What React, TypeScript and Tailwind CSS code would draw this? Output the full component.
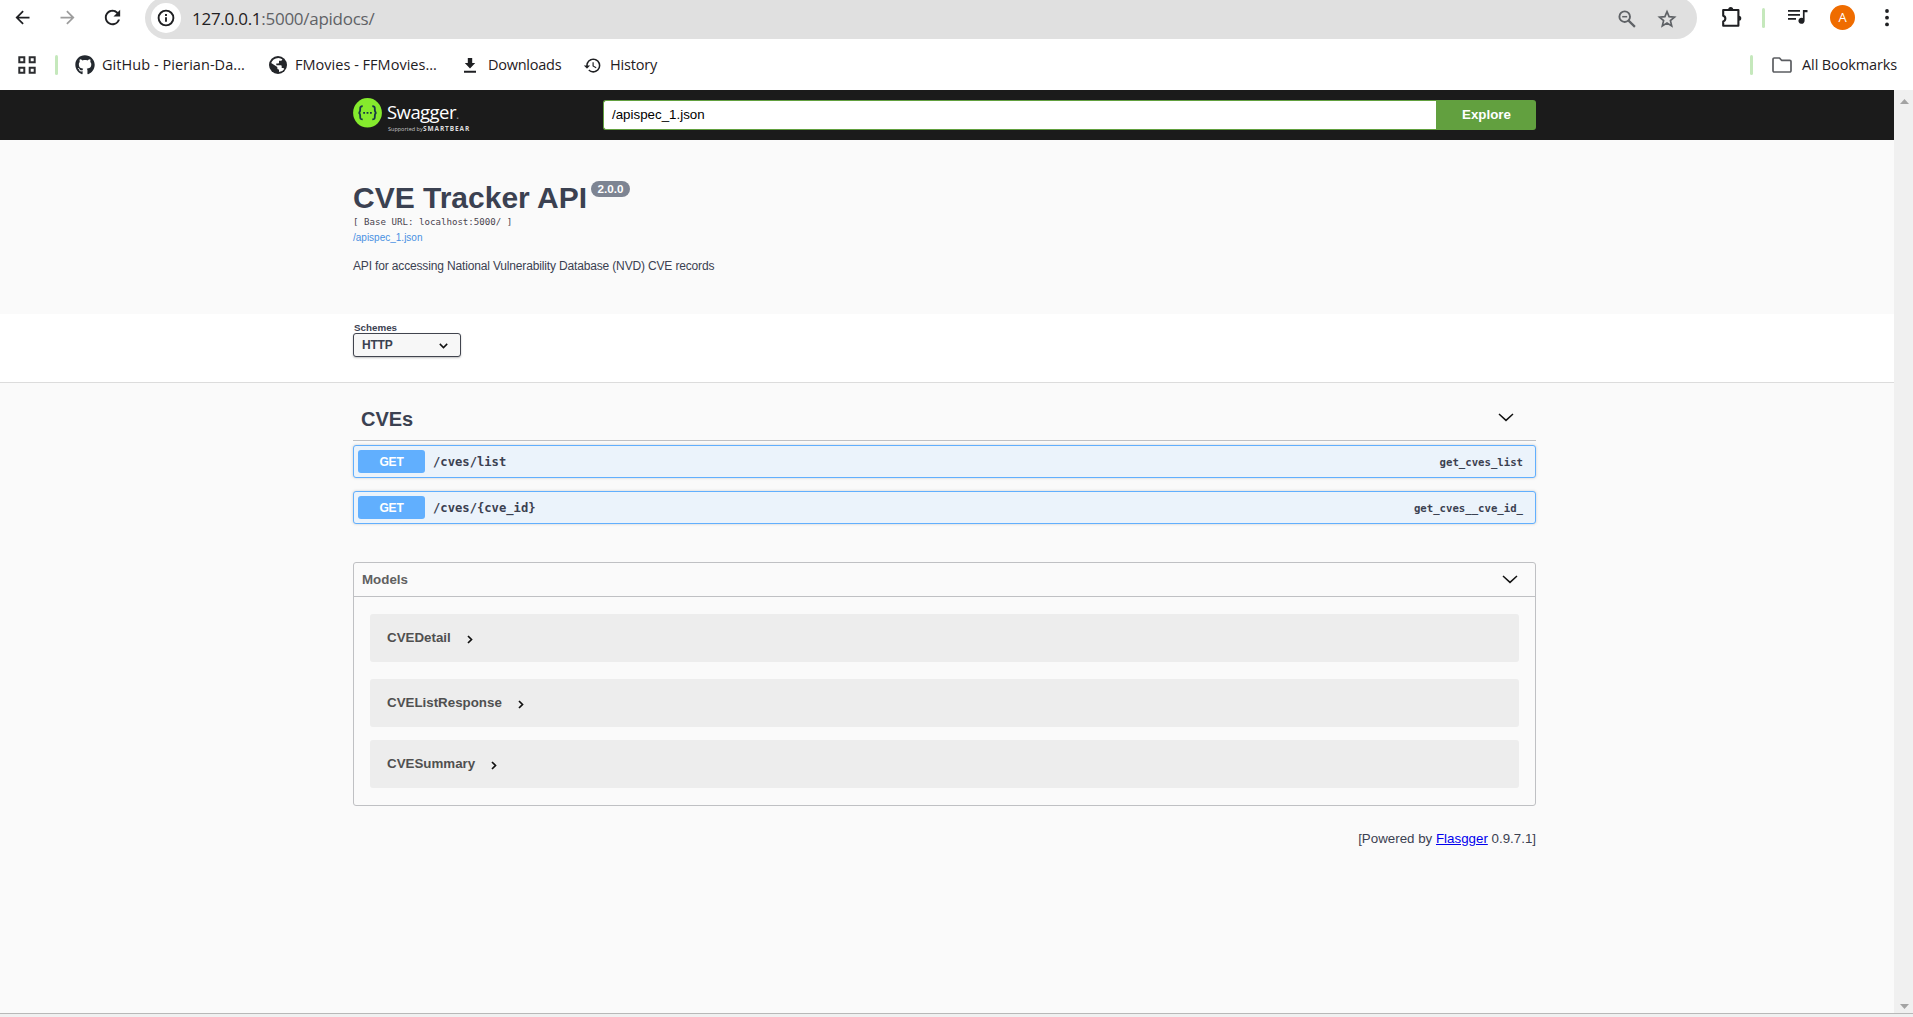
import React from "react";
import { MdArrowBack, MdArrowForward, MdRefresh, MdHistory } from "react-icons/md";
import { FaGithub } from "react-icons/fa";

const sans = "font-['Liberation_Sans',Arial,sans-serif]";
const mono = "font-['DejaVu_Sans_Mono',monospace]";

function Divider() {
  return <div className="h-5 w-[3px] shrink-0 rounded-full bg-[#c5e8bc]" />;
}

function Toolbar() {
  return (
    <div className="flex h-[39px] overflow-hidden text-[#1f2023]">
      <MdArrowBack className="ml-[12px] mt-[7px] size-[21px] shrink-0" />
      <MdArrowForward className="ml-[24px] mt-[7px] size-[21px] shrink-0 text-[#9d9d9d]" />
      <MdRefresh className="ml-[23px] mt-[6px] size-[23px] shrink-0" />
      <div className="-mt-[3px] ml-[21px] flex h-[42px] w-[1552px] shrink-0 items-center rounded-full bg-[#e0e0e0] pl-[6px] pr-[20px]">
        <div className="flex size-[30px] items-center justify-center rounded-full bg-white">
          <svg viewBox="0 0 18 18" className="size-[18px]" fill="none" stroke="#1f2023" strokeWidth="1.9">
            <circle cx="9" cy="9" r="7.4" />
            <path d="M9 8.3v4.400M9 5v2" />
          </svg>
        </div>
        <div className="ml-[11px] grow pt-[2px] font-['Open_Sans',sans-serif] text-[17px] leading-6 tracking-[-0.270px] text-[#5f6266]">
          <span className="text-[#1f2023]">127.0.0.1</span>:5000/apidocs/
        </div>
        <svg viewBox="0 0 18 18" className="mr-[21px] mt-px size-[18px]" fill="none" stroke="#5f6266" strokeWidth="1.9">
          <circle cx="6.7" cy="6.7" r="5.3" />
          <path d="M10.600 10.600l6.300 6.300" strokeWidth="2.2" />
          <path d="M4.200 6.700h5" strokeWidth="1.5" />
        </svg>
        <svg viewBox="0 0 20 20" className="mt-px size-[20px]" fill="none" stroke="#5f6266" strokeWidth="1.7">
          <path d="M10 2.600l2.100 5 5.400.5-4.100 3.500 1.300 5.300-4.700-2.900-4.700 2.900 1.300-5.300-4.100-3.500 5.400-.5z" />
        </svg>
      </div>
      <svg viewBox="0 0 21 21" className="ml-[24px] mt-[7px] size-[21px] shrink-0">
        <path d="M2.200 3h15.200v15.800H2.200v-4.400a2.900 2.900 0 0 0 0-5.600z" fill="none" stroke="#1f2023" strokeWidth="2.1" strokeLinejoin="round" />
        <path d="M7.200 2.600a2.500 2.500 0 0 1 5 0zM17.800 8.800a2.500 2.500 0 0 1 0 5z" fill="#1f2023" />
      </svg>
      <div className="ml-[20px] mt-[8px]"><Divider /></div>
      <svg viewBox="0 0 20 16" className="ml-[23px] mt-[9px] h-[16px] w-[20px] shrink-0">
        <path d="M0 1h12v1.800H0zM0 5h12v1.800H0zM0 9h8v1.800H0z" fill="#1f2023" />
        <path d="M14.900 1H19.500v2.200H16.600V11.500a3.100 3.100 0 1 1-1.700-2.500z" fill="#1f2023" />
      </svg>
      <div className="ml-[22px] mt-[5px] flex size-[25px] shrink-0 items-center justify-center rounded-full bg-[#ef6c00] font-['Open_Sans',sans-serif] text-[13px] text-white">
        A
      </div>
      <svg viewBox="0 0 4 18" className="ml-[30px] mt-[9px] h-[18px] w-[4px] shrink-0" fill="#1f2023">
        <circle cx="2" cy="2" r="1.900" />
        <circle cx="2" cy="8.700" r="1.900" />
        <circle cx="2" cy="15.400" r="1.900" />
      </svg>
    </div>
  );
}

function Bookmarks() {
  return (
    <div className="flex h-[51px] items-center pt-px font-['Open_Sans',sans-serif] text-[14.500px] text-[#1f2023]">
      <svg viewBox="0 0 18 18" className="ml-[18px] size-[18px]" fill="none" stroke="#2b2c2f" strokeWidth="2">
        <path d="M1.300 1.300h5v5h-5zM11.700 1.300h5v5h-5zM1.300 11.700h5v5h-5zM11.700 11.700h5v5h-5z" />
      </svg>
      <div className="ml-[19px]"><Divider /></div>
      <FaGithub className="ml-[17px] size-[20px] text-[#24292f]" />
      <span className="ml-[7px] w-[167px] whitespace-nowrap tracking-[0.050px]">GitHub - Pierian-Da...</span>
      <svg viewBox="0 0 18 18" className="size-[18px]">
        <circle cx="9" cy="9" r="9" fill="#24262a" />
        <path d="M9.500 1.900c1.500.1 2.700.6 3.800 1.400-.2 1-.9 1.500-1.900 1.500H10v1.700c0 .6-.4 1-1 1H7.300v1.700h4.300c.7 0 1.100.5 1.100 1.100v1.600h1.200c.7 0 1.200.4 1.400 1a7 7 0 0 1-5.300 3.200V13.600c-1 0-1.700-.8-1.700-1.700V11L2.200 7.100C3 4.200 5.500 2 9.500 1.900z" fill="#fff" />
      </svg>
      <span className="ml-[8px] w-[169px] whitespace-nowrap tracking-[0.020px]">FMovies - FFMovies...</span>
      <svg viewBox="0 0 12 15" className="h-[15px] w-[12px]" fill="#1f2023">
        <path d="M3.800 0h4.400v5h3L6 10.500.8 5h3zM0 12.800h12v2H0z" />
      </svg>
      <span className="ml-[12px] w-[95px] tracking-[-0.250px]">Downloads</span>
      <MdHistory className="size-[19px]" />
      <span className="ml-[8px] tracking-[-0.200px]">History</span>
      <div className="ml-auto"><Divider /></div>
      <svg viewBox="0 0 20 16" className="ml-[19px] h-[16px] w-[20px]" fill="none" stroke="#5b5d61" strokeWidth="1.700" strokeLinejoin="round">
        <path d="M1 2.200A1.200 1.200 0 0 1 2.200 1H7.500l2 2.300h8.300A1.200 1.200 0 0 1 19 4.500v9.300a1.200 1.200 0 0 1-1.200 1.200H2.200A1.200 1.200 0 0 1 1 13.800z" />
      </svg>
      <span className="ml-[10px] mr-[16px] whitespace-nowrap tracking-[-0.130px]">All Bookmarks</span>
    </div>
  );
}

function Header() {
  return (
    <div className="flex h-[50px] bg-[#1b1b1b] pl-[353px]">
      <svg viewBox="0 0 29 30" className="mt-[8px] h-[30px] w-[29px] shrink-0">
        <ellipse cx="14.500" cy="14.800" rx="14.400" ry="14.700" fill="#85ea2d" />
        <path d="M9.700 8.200c-2.100 0-2.600.8-2.500 2.600.1 2.300 0 3.700-1.600 4 1.600.3 1.700 1.700 1.600 4-.1 1.800.4 2.600 2.500 2.600M19.300 8.200c2.100 0 2.600.8 2.500 2.600-.1 2.300 0 3.700 1.600 4-1.600.3-1.700 1.700-1.600 4 .1 1.800-.4 2.600-2.500 2.600" fill="none" stroke="#173647" strokeWidth="1.800" />
        <path d="M10.200 14h1.800v1.700h-1.800zM13.600 14h1.800v1.700h-1.800zM17 14h1.800v1.700H17z" fill="#173647" />
      </svg>
      <div className="ml-[5px] w-[216px] font-['Open_Sans',sans-serif] text-white">
        <div className="mt-[9px] h-[26px] text-[18.500px] leading-[25px] tracking-[-0.550px]">
          Swagger<span className="text-[12px] text-[#999]">.</span>
        </div>
        <div className="flex h-[8px] items-center whitespace-nowrap pl-px leading-[8px]">
          <span className="w-[35px] text-[5.500px] text-[#c8c8c8]">Supported by</span>
          <span className="text-[6.500px] font-bold tracking-[0.900px] text-[#ddd]">SMARTBEAR</span>
        </div>
      </div>
      <div className={`mt-[10px] flex h-[30px] w-[833px] items-center rounded-l-[3px] border border-r-0 border-[#62a03f] bg-white pl-[8px] text-[13.333px] text-black ${sans}`}>
        /apispec_1.json
      </div>
      <div className={`mt-[10px] flex h-[30px] w-[100px] items-center justify-center rounded-r-[3px] bg-[#62a03f] pl-px text-[13.333px] font-bold text-white ${sans}`}>
        Explore
      </div>
    </div>
  );
}

function Info() {
  return (
    <div className="h-[174px] pl-[353px] pt-[41px] text-[#3b4151]">
      <div className="flex h-[35px]">
        <h2 className="whitespace-nowrap text-[30px] font-bold leading-[34px]">CVE Tracker API</h2>
        <span className="ml-[4px] flex h-[16px] w-[39px] items-center justify-center rounded-full bg-[#7d8492] text-[11.667px] font-bold text-white">
          2.0.0
        </span>
      </div>
      <pre className={`h-[15px] text-[9.130px] leading-[12px] text-[#4a4550] ${mono}`}>[ Base URL: localhost:5000/ ]</pre>
      <div className="h-[26px] text-[10px] leading-[13px] text-[#4990e2]">/apispec_1.json</div>
      <p className="text-[12px] leading-[18px] tracking-[-0.155px]">API for accessing National Vulnerability Database (NVD) CVE records</p>
    </div>
  );
}

function Schemes() {
  return (
    <div className="h-[69px] border-b border-[#dcdcdc] bg-white pl-[353px] pt-[7px] text-[#3b4151]">
      <div className="h-[12px] pl-px text-[9.800px] font-bold leading-[13px]">Schemes</div>
      <div className="flex h-[24px] w-[108px] items-center justify-between rounded-[3px] border border-[#41444e] bg-[#f7f7f7] pl-[8px] pr-[12px] text-[12px] font-bold tracking-[-0.200px] shadow-[0_1px_2px_rgba(0,0,0,0.250)]">
        HTTP
        <svg viewBox="0 0 9 6" className="mt-px h-[6px] w-[9px]" fill="none" stroke="#111" strokeWidth="1.500">
          <path d="M.8.9l3.700 3.700L8.200.9" />
        </svg>
      </div>
    </div>
  );
}

function Chevron() {
  return (
    <svg viewBox="0 0 16 9" className="h-[9px] w-[16px]" fill="none" stroke="#111" strokeWidth="1.500">
      <path d="M1 1l7 6.400L15 1" />
    </svg>
  );
}

function Operation({ path, id }: { path: string; id: string }) {
  return (
    <div className="flex h-[33px] items-center rounded-[3px] border border-[#61affe] bg-[#ebf3fb] pl-[4px] pr-[12px] text-[#3b4151] shadow-[0_0_3px_rgba(0,0,0,0.190)]">
      <span className="flex h-[23px] w-[67px] items-center justify-center rounded-[3px] bg-[#61affe] text-[12px] font-bold tracking-[-0.200px] text-white">GET</span>
      <span className={`ml-[8px] grow pt-[2px] text-[12.180px] font-bold ${mono}`}>{path}</span>
      <span className={`pt-[2px] text-[10.660px] font-bold ${mono}`}>{id}</span>
    </div>
  );
}

function Model({ name }: { name: string }) {
  return (
    <div className="flex h-[48px] items-center rounded-[3px] bg-[#ededed] pb-px pl-[17px] text-[13.333px] font-bold text-[#505050]">
      {name}
      <svg viewBox="0 0 6 9" className="ml-[16px] mt-[4px] h-[9px] w-[6px]" fill="none" stroke="#111" strokeWidth="1.700">
        <path d="M1 1l3.500 3.500L1 8" />
      </svg>
    </div>
  );
}

export default function App() {
  return (
    <div className="flex h-[1017px] w-[1913px] flex-col overflow-hidden bg-white">
      <Toolbar />
      <Bookmarks />
      <div className="flex h-[923px]">
        <div className={`w-[1894px] bg-[#fafafa] ${sans}`}>
          <Header />
          <Info />
          <Schemes />
          <div className="w-[1536px] pl-[353px] pt-[25px]">
            <div className="flex h-[33px] justify-between border-b border-[#bfc0c3] pl-[8px] pr-[22px]">
              <h3 className="text-[20px] font-bold leading-[22px] text-[#3b4151]">CVEs</h3>
              <div className="mt-[5px]"><Chevron /></div>
            </div>
            <div className="mt-[4px] flex flex-col gap-[13px]">
              <Operation path="/cves/list" id="get_cves_list" />
              <Operation path="/cves/{cve_id}" id="get_cves__cve_id_" />
            </div>
            <div className="mt-[38px] h-[244px] rounded-[3px] border border-[#bfc0c3]">
              <div className="flex h-[34px] items-center justify-between border-b border-[#bfc0c3] pl-[8px] pr-[17px] text-[13.333px] font-bold text-[#606060]">
                Models
                <Chevron />
              </div>
              <div className="px-[16px] pt-[17px]">
                <Model name="CVEDetail" />
                <div className="mb-[13px] mt-[17px]"><Model name="CVEListResponse" /></div>
                <Model name="CVESummary" />
              </div>
            </div>
            <div className="mt-[24px] text-right text-[13.333px] leading-[18px] text-[#3b4151]">
              [Powered by <span className="text-[#0000ee] underline">Flasgger</span> 0.9.7.1]
            </div>
          </div>
        </div>
        <div className="flex w-[19px] flex-col items-center justify-between bg-[#f0f0f0] pb-[4px] pl-[2px] pt-[9px]">
          <svg viewBox="0 0 9 5" className="h-[5px] w-[9px]" fill="#a3a3a3"><path d="M0 5l4.500-5L9 5z" /></svg>
          <svg viewBox="0 0 9 5" className="h-[5px] w-[9px]" fill="#a3a3a3"><path d="M0 0h9L4.500 5z" /></svg>
        </div>
      </div>
      <div className="h-[4px] border-t border-[#b8b8b8] bg-[#f0f0f0]" />
    </div>
  );
}
